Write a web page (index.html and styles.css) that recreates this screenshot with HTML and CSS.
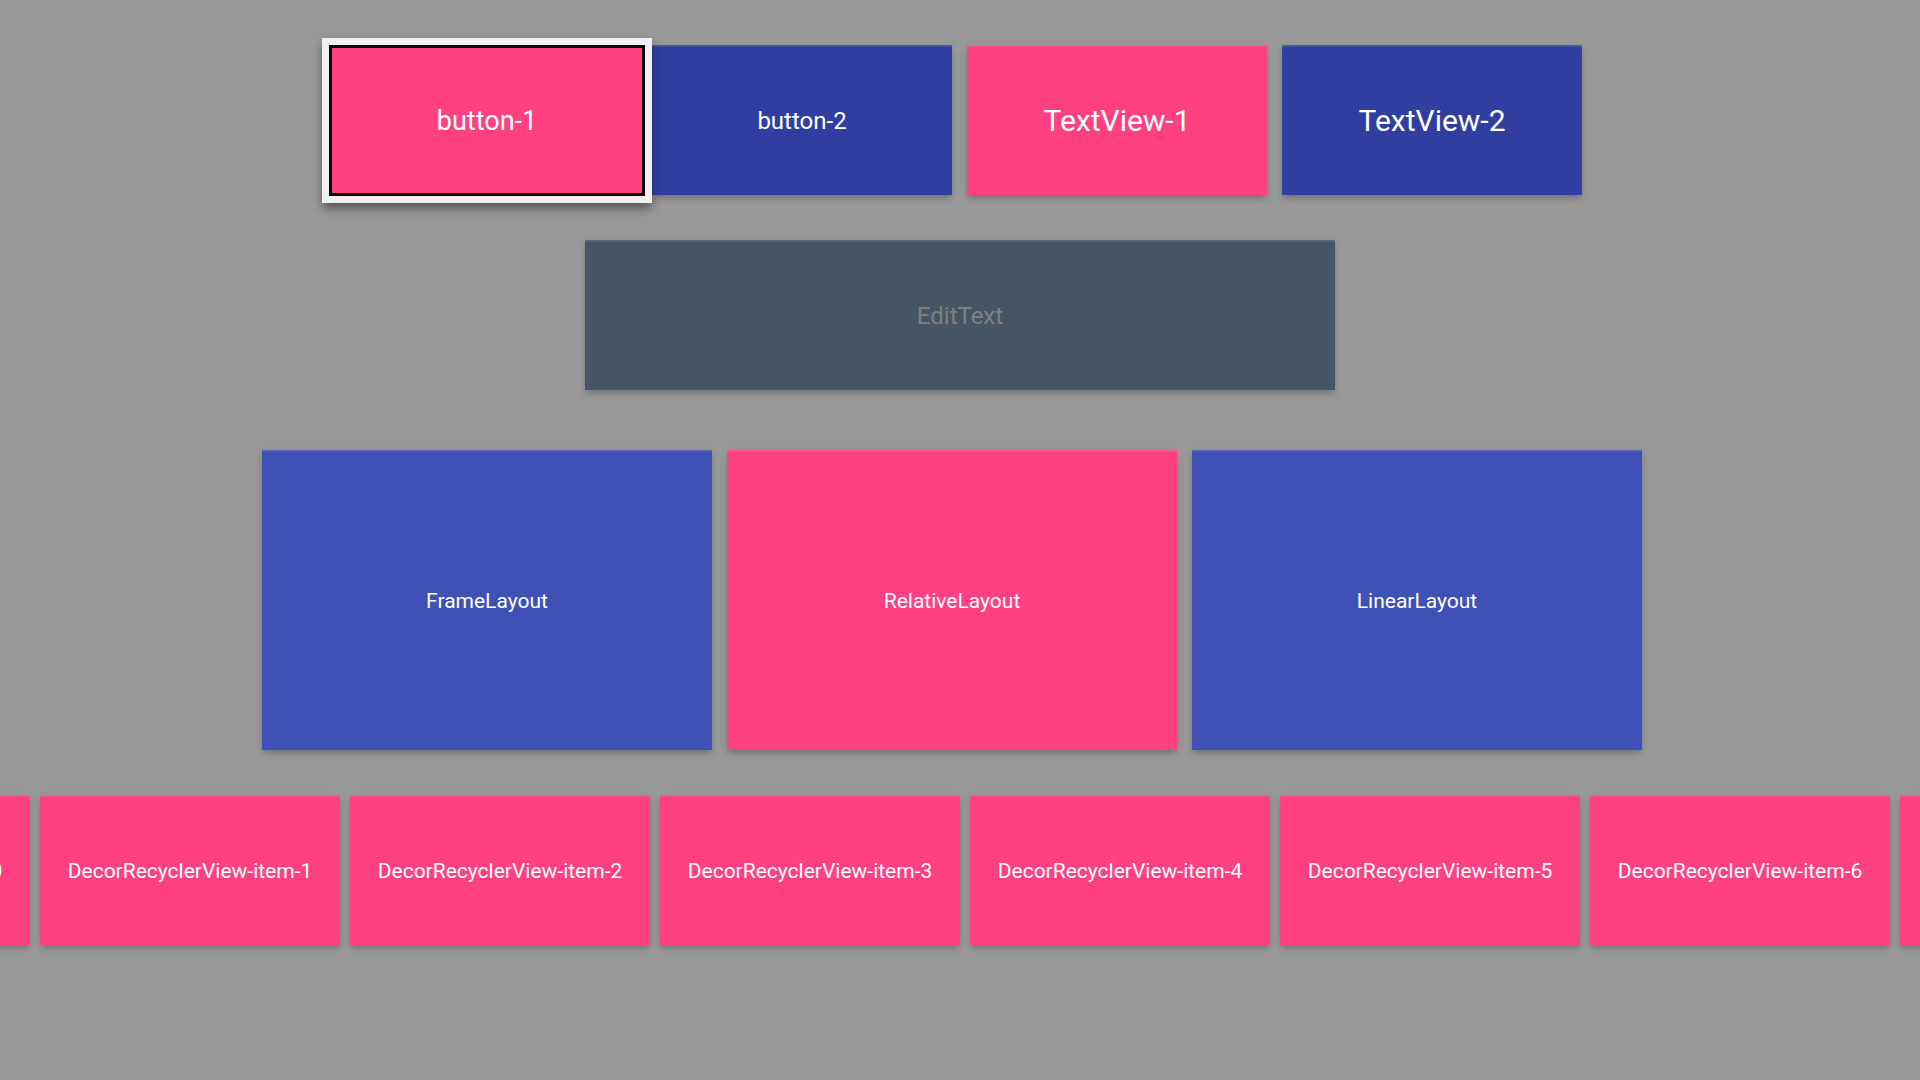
FILE: index.html
```html
<!DOCTYPE html>
<html lang="en">
<head>
<meta charset="utf-8">
<title>Focus demo</title>
<link rel="stylesheet" href="styles.css">
</head>
<body>
<main class="page">
  <section class="row row-controls">
    <button class="tile pink focused" type="button">button-1</button>
    <button class="tile indigo-dark" type="button">button-2</button>
    <div class="tile pink text-large">TextView-1</div>
    <div class="tile indigo-dark text-large">TextView-2</div>
  </section>
  <section class="row row-edit">
    <input class="tile slate" type="text" placeholder="EditText" aria-label="EditText">
  </section>
  <section class="row row-layouts">
    <div class="tile tall indigo">FrameLayout</div>
    <div class="tile tall pink">RelativeLayout</div>
    <div class="tile tall indigo">LinearLayout</div>
  </section>
  <section class="recycler">
    <ul class="recycler-list">
      <li class="tile item pink">DecorRecyclerView-item-0</li>
      <li class="tile item pink">DecorRecyclerView-item-1</li>
      <li class="tile item pink">DecorRecyclerView-item-2</li>
      <li class="tile item pink">DecorRecyclerView-item-3</li>
      <li class="tile item pink">DecorRecyclerView-item-4</li>
      <li class="tile item pink">DecorRecyclerView-item-5</li>
      <li class="tile item pink">DecorRecyclerView-item-6</li>
      <li class="tile item pink">DecorRecyclerView-item-7</li>
    </ul>
  </section>
</main>
</body>
</html>
```
FILE: styles.css
```css
* {
  box-sizing: border-box;
}

body {
  margin: 0;
  background: #999;
  font-family: Roboto, "Liberation Sans", sans-serif;
  color: #fff;
}

.page {
  display: flex;
  flex-direction: column;
  padding: 45px 0;
  overflow-x: hidden;
}

.row {
  display: flex;
  justify-content: center;
  gap: 15px;
}

.row-controls {
  padding-right: 1px;
}

.row-edit {
  margin-top: 45px;
}

.row-layouts {
  margin-top: 60px;
  padding-right: 16px;
}

.recycler {
  margin-top: 45px;
}

.recycler-list {
  display: flex;
  gap: 10px;
  margin: 0 0 0 -270px;
  padding: 0;
  list-style: none;
}

.tile {
  display: flex;
  align-items: center;
  justify-content: center;
  flex: 0 1 300px;
  min-width: 0;
  height: 150px;
  margin: 0;
  padding: 2px 0 0;
  border: 0;
  font-family: inherit;
  font-size: 24px;
  line-height: 28px;
  color: #fff;
  text-align: center;
  box-shadow:
    inset 0 1px rgba(255, 255, 255, 0.06),
    inset 0 2px rgba(255, 255, 255, 0.08),
    0 4px 6px -1px rgba(0, 0, 0, 0.2),
    0 2px 10px rgba(0, 0, 0, 0.08);
}

.tall {
  flex-basis: 450px;
  height: 300px;
  font-size: 21px;
}

.item {
  flex-shrink: 0;
  font-size: 21px;
}

.text-large {
  font-size: 30px;
}

.pink {
  background: #ff4081;
}

.indigo {
  background: #3f51b5;
}

.indigo-dark {
  background: #303f9f;
}

.slate {
  flex-basis: 750px;
  background: #455565;
  outline: none;
}

.slate::placeholder {
  color: #808080;
  opacity: 1;
}

/* The focused tile grows by a tenth and overlaps its neighbour. */
.focused {
  z-index: 1;
  flex-basis: 330px;
  height: 165px;
  margin: -7px -15px -8px;
  padding: 0;
  border: 7px solid #f0f0f2;
  font-size: 27px;
  box-shadow:
    inset 0 0 0 3px #0c0509,
    0 7px 9px -1px rgba(0, 0, 0, 0.36),
    0 2px 10px rgba(0, 0, 0, 0.12);
}
```
